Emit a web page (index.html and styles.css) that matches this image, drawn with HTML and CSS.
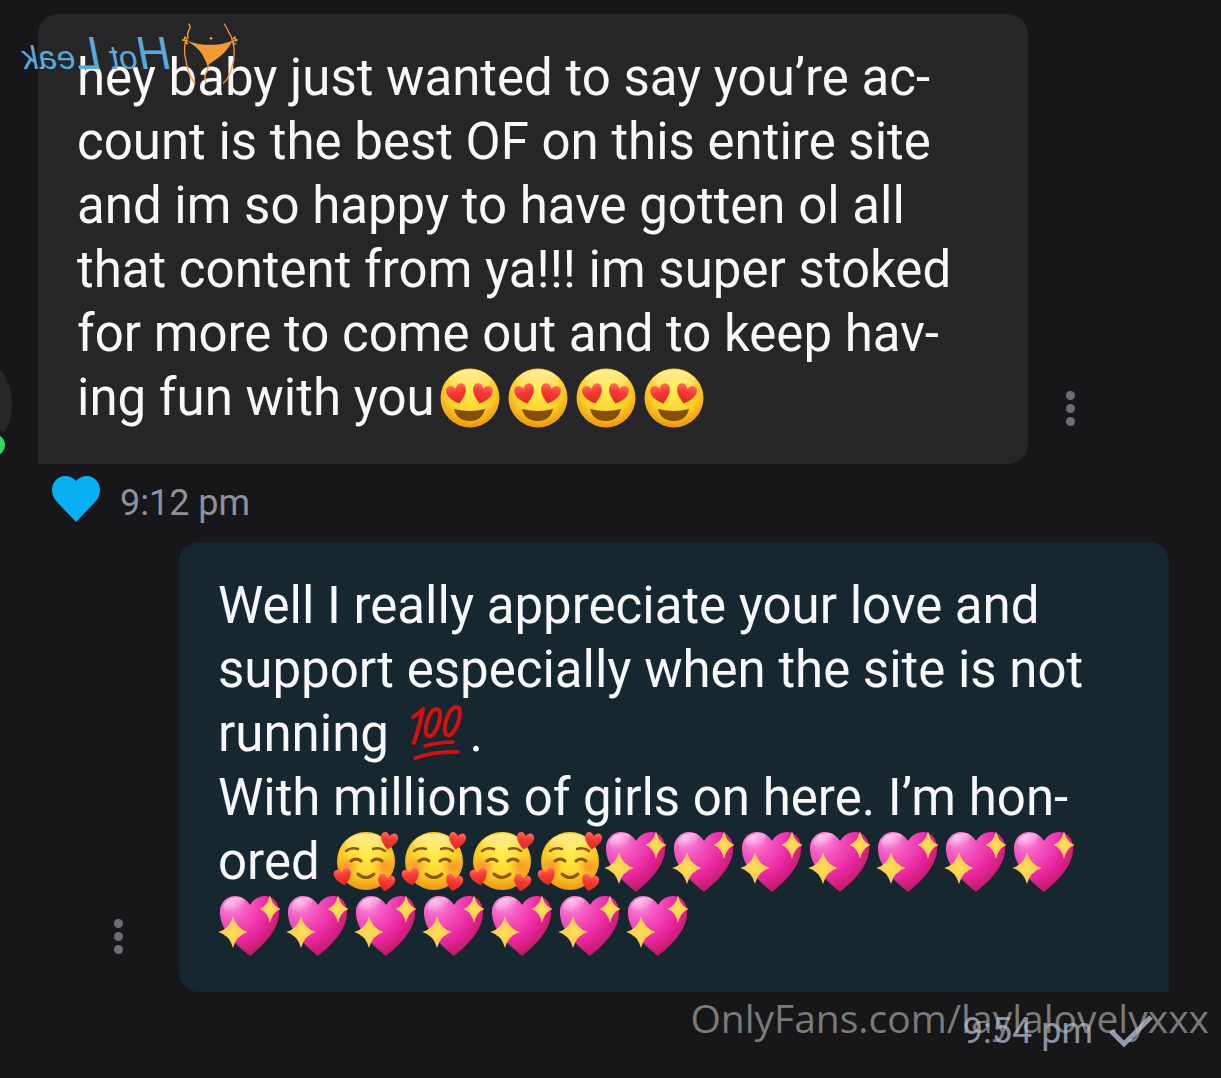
FILE: index.html
```
<!DOCTYPE html>
<html lang="en">
<head>
    <meta charset="UTF-8">
    <meta name="viewport" content="width=device-width, initial-scale=1.0">
    <title>Messages</title>
    <link rel="stylesheet" href="styles.css">
</head>
<body>
    <!-- emoji shapes, reused below -->
    <svg class="sprite" aria-hidden="true">
        <defs>
            <radialGradient id="face" cx="50%" cy="35%" r="65%">
                <stop offset="0" stop-color="#ffee4f"/>
                <stop offset="0.6" stop-color="#fdd32b"/>
                <stop offset="1" stop-color="#ee9411"/>
            </radialGradient>
            <linearGradient id="shine" x1="0" y1="0" x2="0" y2="1">
                <stop offset="0" stop-color="#fff" stop-opacity="0.5"/>
                <stop offset="1" stop-color="#fff" stop-opacity="0"/>
            </linearGradient>
            <linearGradient id="red" x1="0" y1="0" x2="0" y2="1">
                <stop offset="0" stop-color="#ff6a5c"/>
                <stop offset="0.4" stop-color="#f53a35"/>
                <stop offset="1" stop-color="#dc2823"/>
            </linearGradient>
            <radialGradient id="pink" cx="20%" cy="12%" r="95%">
                <stop offset="0" stop-color="#ff9be0"/>
                <stop offset="0.25" stop-color="#f55fc6"/>
                <stop offset="0.65" stop-color="#ea28a2"/>
                <stop offset="1" stop-color="#bd175f"/>
            </radialGradient>
            <radialGradient id="blush">
                <stop offset="0" stop-color="#f8752a" stop-opacity="0.65"/>
                <stop offset="1" stop-color="#f8752a" stop-opacity="0"/>
            </radialGradient>
            <radialGradient id="gold">
                <stop offset="0" stop-color="#ffdf55"/>
                <stop offset="1" stop-color="#f7c552"/>
            </radialGradient>
            <path id="mini-heart" fill="url(#red)" d="M0 9C-5 5-9 1-9-4C-9-9-3-11 0-5C3-11 9-9 9-4C9 1 5 5 0 9Z"/>
            <path id="spark" fill="url(#gold)" d="M0-14Q3-3 14 0Q3 3 0 14Q-3 3-14 0Q-3-3 0-14Z"/>
        </defs>
        <symbol id="heart-eyes" viewBox="0 0 68 60">
            <circle cx="35" cy="30" r="29.500" fill="url(#face)"/>
            <ellipse cx="35" cy="13" rx="21" ry="11" fill="url(#shine)"/>
            <use href="#mini-heart" transform="translate(22 26) rotate(-14) scale(1.100)"/>
            <use href="#mini-heart" transform="translate(47 26) rotate(14) scale(1.100)"/>
            <path d="M19 41Q35 45 50 41Q47 53 35 53Q22 53 19 41Z" fill="#83500b"/>
        </symbol>
        <symbol id="loving" viewBox="0 0 68 60">
            <circle cx="34" cy="29" r="29" fill="url(#face)"/>
            <ellipse cx="34" cy="12" rx="20" ry="10" fill="url(#shine)"/>
            <circle cx="16" cy="34" r="11" fill="url(#blush)"/>
            <circle cx="52" cy="34" r="11" fill="url(#blush)"/>
            <g fill="none" stroke="#8a570d" stroke-width="2.500" stroke-linecap="round">
                <path d="M14 19Q19 15 26 17M41 17Q48 15 53 19"/>
                <path d="M19 29Q24 25 29 29M40 29Q45 25 50 29M26 42Q34 49 42 42" stroke-width="3"/>
            </g>
            <use href="#mini-heart" transform="translate(57 9) rotate(9) scale(0.950)"/>
            <use href="#mini-heart" transform="translate(11 45) rotate(-12) scale(0.950)"/>
            <use href="#mini-heart" transform="translate(54 51) rotate(12) scale(0.950)"/>
        </symbol>
        <symbol id="sparkle-heart" viewBox="0 0 68 60">
            <path fill="url(#pink)" d="M32 60C20 50 3 36 2 18C1 7 9 0 17 0C24 0 29 4 32 9C35 4 40 0 47 0C55 0 62 7 61 18C60 36 44 50 32 60Z"/>
            <ellipse cx="16" cy="8" rx="11" ry="6" fill="url(#shine)" transform="rotate(-20 16 8)"/>
            <use href="#spark" transform="translate(15 36) scale(1.050 1.150)"/>
            <use href="#spark" transform="translate(52 13) scale(0.750 1)"/>
        </symbol>
        <symbol id="hundred" viewBox="0 0 68 60">
            <g fill="none" stroke="#d51013" stroke-linecap="round" stroke-linejoin="round">
                <path d="M11 13Q17 10 21 5Q18 20 12 39" stroke-width="4"/>
                <path d="M35 5C27 4 20 29 26 32C34 35 43 6 35 5ZM55 3C46 2 39 28 45 31C53 34 63 5 55 3Z" stroke-width="4"/>
                <path d="M23 42Q38 38 51 38M13 54Q34 47 56 48" stroke-width="3.500"/>
            </g>
        </symbol>
    </svg>

    <main class="chat">
        <div class="message received">
            <div class="avatar"><span class="online"></span></div>
            <div class="bubble">
                <p>hey baby just wanted to say you’re ac&shy;count is the best OF on this entire site and im so happy to have gotten ol all that content from ya!!! im super stoked for more to come out and to keep hav&shy;ing fun with you<svg class="emoji" role="img" aria-label="😍"><use href="#heart-eyes"/></svg><svg class="emoji" role="img" aria-label="😍"><use href="#heart-eyes"/></svg><svg class="emoji" role="img" aria-label="😍"><use href="#heart-eyes"/></svg><svg class="emoji" role="img" aria-label="😍"><use href="#heart-eyes"/></svg></p>
            </div>
            <button class="more" type="button" aria-label="More"><i></i><i></i><i></i></button>
        </div>
        <div class="meta meta-received">
            <button class="like" type="button" aria-label="Liked">
                <svg width="48" height="46" viewBox="0 0 48 46"><path fill="#08aff2" d="M24 46L5 26C-2 19-1 9 4 4C10-2 19-1 24 5C29-1 38-2 44 4C49 9 50 19 43 26Z"/></svg>
            </button>
            <time>9:12 pm</time>
        </div>

        <div class="message sent">
            <button class="more" type="button" aria-label="More"><i></i><i></i><i></i></button>
            <div class="bubble">
                <p>Well I really appreciate your love and support especially when the site is not running <svg class="emoji" role="img" aria-label="💯"><use href="#hundred"/></svg>.</p>
                <p>With millions of girls on here. I’m hon&shy;ored <svg class="emoji" role="img" aria-label="🥰"><use href="#loving"/></svg><svg class="emoji" role="img" aria-label="🥰"><use href="#loving"/></svg><svg class="emoji" role="img" aria-label="🥰"><use href="#loving"/></svg><svg class="emoji" role="img" aria-label="🥰"><use href="#loving"/></svg><svg class="emoji" role="img" aria-label="💖"><use href="#sparkle-heart"/></svg><svg class="emoji" role="img" aria-label="💖"><use href="#sparkle-heart"/></svg><svg class="emoji" role="img" aria-label="💖"><use href="#sparkle-heart"/></svg><svg class="emoji" role="img" aria-label="💖"><use href="#sparkle-heart"/></svg><svg class="emoji" role="img" aria-label="💖"><use href="#sparkle-heart"/></svg><svg class="emoji" role="img" aria-label="💖"><use href="#sparkle-heart"/></svg><svg class="emoji" role="img" aria-label="💖"><use href="#sparkle-heart"/></svg><svg class="emoji" role="img" aria-label="💖"><use href="#sparkle-heart"/></svg><svg class="emoji" role="img" aria-label="💖"><use href="#sparkle-heart"/></svg><svg class="emoji" role="img" aria-label="💖"><use href="#sparkle-heart"/></svg><svg class="emoji" role="img" aria-label="💖"><use href="#sparkle-heart"/></svg><svg class="emoji" role="img" aria-label="💖"><use href="#sparkle-heart"/></svg><svg class="emoji" role="img" aria-label="💖"><use href="#sparkle-heart"/></svg><svg class="emoji" role="img" aria-label="💖"><use href="#sparkle-heart"/></svg></p>
            </div>
        </div>
        <div class="meta meta-sent">
            <time>9:54 pm</time>
            <svg width="44" height="34" viewBox="0 0 44 34" aria-hidden="true"><path d="M2 17L15 30L42 3" fill="none" stroke="#929bab" stroke-width="5"/></svg>
            <div class="watermark">OnlyFans.com/laylalovelyxxx</div>
        </div>
    </main>

    <!-- mirrored logo over the first message -->
    <div class="logo">
        <svg width="58" height="62" viewBox="0 0 174 186" aria-hidden="true">
            <g fill="none" stroke="#f39a35" stroke-width="4" stroke-linecap="round">
                <path d="M150 3Q142 12 150 22Q156 32 152 45M43 3Q34 18 28 32Q22 40 20 50"/>
                <path d="M160 55Q166 85 158 115Q152 154 132 180M18 55Q8 95 20 130Q28 165 46 180"/>
                <path d="M155 49Q165 35 162 49Q178 52 155 53Q160 65 154 61M19 49Q8 35 12 48Q-5 54 19 54Q14 67 9 61"/>
                <path d="M92 122Q90 138 102 158L100 178"/>
            </g>
            <path fill="#f39a35" d="M18 53Q85 78 157 53Q122 72 110 94Q100 112 94 128Q82 118 70 110Q38 90 18 53Z"/>
            <circle cx="83" cy="46" r="4" fill="#f39a35"/>
        </svg>
        <span class="logo-text"><b>H</b>ot <b>L</b>eak</span>
    </div>
</body>
</html>
```
FILE: styles.css
```
* {
    box-sizing: border-box;
}

body {
    margin: 0;
    background-color: #171719;
    color: #f8f8f8;
    font-family: Roboto, 'Liberation Sans', sans-serif;
    position: relative;
}

button {
    border: 0;
    padding: 0;
    background: none;
    cursor: pointer;
}

.sprite {
    position: absolute;
    width: 0;
    height: 0;
}

.chat {
    padding-top: 14px;
}

.message {
    display: flex;
    align-items: flex-end;
    position: relative;
}

.received {
    padding-left: 38px;
    padding-right: 133px;
}

.sent {
    padding-left: 88px;
    padding-right: 52px;
}

.bubble {
    flex: 1;
    min-width: 0;
    padding: 32px 39px 34px;
    border-radius: 20px;
}

.received .bubble {
    background-color: #262628;
    border-bottom-left-radius: 0;
}

.sent .bubble {
    background-color: #172730;
    border-bottom-right-radius: 0;
}

.bubble p {
    margin: 0;
    font-size: 51px;
    line-height: 64px;
}

.emoji {
    width: 68px;
    height: 60px;
    margin: -4px 0;
    vertical-align: -9px;
}

.more {
    display: flex;
    flex-direction: column;
    align-items: center;
    justify-content: center;
    gap: 4px;
    width: 60px;
    height: 60px;
    margin-bottom: 26px;
}

.received .more {
    margin-left: 12px;
    margin-right: -12px;
}

.sent .more {
    margin-right: 31px;
}

.more i {
    width: 9px;
    height: 9px;
    border-radius: 50%;
    background-color: #6b6f74;
}

.avatar {
    position: absolute;
    left: -102px;
    bottom: 3px;
    width: 114px;
    height: 114px;
    border-radius: 50%;
    background-color: #262729;
}

.online {
    position: absolute;
    right: 2px;
    bottom: 0;
    width: 32px;
    height: 32px;
    border: 5px solid #171719;
    border-radius: 50%;
    background-color: #36d45f;
}

.meta {
    display: flex;
    align-items: center;
    height: 78px;
    font-size: 36px;
    color: #8a919f;
    position: relative;
}

.meta-received {
    gap: 20px;
    padding-left: 52px;
}

.meta-sent {
    justify-content: flex-end;
    gap: 16px;
    padding-right: 68px;
}

.like {
    padding-bottom: 8px;
}

.like svg {
    display: block;
}

.watermark {
    position: absolute;
    right: 12px;
    top: 0;
    font-family: 'Open Sans', 'Noto Sans', sans-serif;
    font-size: 39px;
    line-height: 52px;
    color: rgba(190, 190, 190, 0.6);
}

.logo {
    display: flex;
    gap: 10px;
    position: absolute;
    left: 22px;
    top: 23px;
    transform: scaleX(-1);
    color: #58a9dc;
}

.logo-text {
    font-family: 'Liberation Sans', sans-serif;
    font-size: 33px;
    font-style: italic;
    line-height: 60px;
}

.logo-text b {
    font-size: 46px;
    font-weight: normal;
}
```
